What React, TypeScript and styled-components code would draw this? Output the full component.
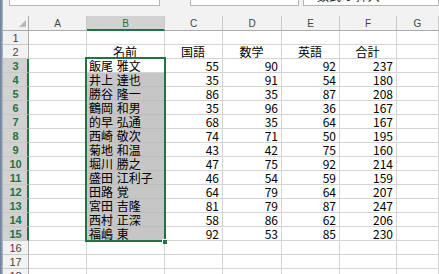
import styled, { createGlobalStyle } from 'styled-components';

const GlobalStyle = createGlobalStyle`
  html, body {
    margin: 0;
    padding: 0;
    background: #fff;
    overflow: hidden;
  }
  body {
    font-family: 'Liberation Sans', Arial, sans-serif;
  }
`;

const GREEN = '#217346';
const GRID = '#d4d4d4';
const HEAD_BG = '#f2f2f2';
const HEAD_SEL = '#d2d2d2';
const HEAD_LINE = '#c8c8c8';
const HEAD_EDGE = '#ababab';
const CELL_FONT = `'Noto Sans CJK JP', 'Liberation Sans', sans-serif`;

const COLUMNS = ['A', 'B', 'C', 'D', 'E', 'F', 'G'];
const ROW_COUNT = 18;
const FIRST_SEL = 3;
const LAST_SEL = 15;

const subjects = ['名前', '国語', '数学', '英語', '合計'];

const students: [string, number, number, number, number][] = [
  ['飯尾 雅文', 55, 90, 92, 237],
  ['井上 達也', 35, 91, 54, 180],
  ['勝谷 隆一', 86, 35, 87, 208],
  ['鶴岡 和男', 35, 96, 36, 167],
  ['的早 弘通', 68, 35, 64, 167],
  ['西崎 敬次', 74, 71, 50, 195],
  ['菊地 和温', 43, 42, 75, 160],
  ['堀川 勝之', 47, 75, 92, 214],
  ['盛田 江利子', 46, 54, 59, 159],
  ['田路 覚', 64, 79, 64, 207],
  ['宮田 吉隆', 81, 79, 87, 247],
  ['西村 正深', 58, 86, 62, 206],
  ['福嶋 東', 92, 53, 85, 230],
];

const Window = styled.div`
  display: flex;
  width: 439px;
  height: 274px;
  overflow: hidden;
  background: ${HEAD_BG};
`;

const Edge = styled.div`
  flex: 0 0 3px;
  background: linear-gradient(to right, #6e8199, #8d9cb0 70%, #c9d0da);
`;

const Main = styled.div`
  flex: 1;
  min-width: 0;
  display: flex;
  flex-direction: column;
`;

const FormulaBar = styled.div`
  flex: 0 0 16px;
  display: flex;
  align-items: flex-start;
  padding-left: 6px;
  gap: 4px;
`;

const BarBox = styled.div<{ $w?: number; $after?: number }>`
  flex: ${(p) => (p.$w ? `0 0 ${p.$w}px` : '1')};
  margin-right: ${(p) => p.$after ?? 0}px;
  height: 6px;
  box-sizing: border-box;
  background: #fff;
  border: 1px solid #b6b6b6;
  border-top: none;
  overflow: hidden;
`;

const BarText = styled.div`
  margin-top: -10px;
  padding-left: 13px;
  font-family: ${CELL_FONT};
  font-size: 12px;
  line-height: 12px;
  color: #222;
  white-space: nowrap;
`;

const Sheet = styled.div`
  display: grid;
  grid-template-columns: 26px 58px 78px 58px 59px 58px 57px 1fr;
  grid-template-rows: 15px repeat(${ROW_COUNT}, 14px);
  background: #fff;
`;

const Corner = styled.div`
  grid-row: 1;
  grid-column: 1;
  background: ${HEAD_BG};
  border-right: 1px solid ${HEAD_EDGE};
  border-bottom: 1px solid ${HEAD_EDGE};
  display: flex;
  align-items: flex-end;
  justify-content: flex-end;
  padding: 0 2px 3px 0;
`;

const ColHead = styled.div<{ $col: number; $sel: boolean }>`
  grid-row: 1;
  grid-column: ${(p) => p.$col};
  background: ${(p) => (p.$sel ? HEAD_SEL : HEAD_BG)};
  border-right: 1px solid ${HEAD_LINE};
  border-bottom: ${(p) => (p.$sel ? `2px solid ${GREEN}` : `1px solid ${HEAD_EDGE}`)};
  color: ${(p) => (p.$sel ? GREEN : '#444')};
  font-size: 10px;
  display: flex;
  align-items: center;
  justify-content: center;
  padding-top: 1px;
`;

const RowHead = styled.div<{ $row: number; $sel: boolean }>`
  grid-row: ${(p) => p.$row};
  grid-column: 1;
  background: ${(p) => (p.$sel ? HEAD_SEL : HEAD_BG)};
  border-bottom: 1px solid ${HEAD_LINE};
  border-right: ${(p) => (p.$sel ? `2px solid ${GREEN}` : `1px solid ${HEAD_EDGE}`)};
  color: ${(p) => (p.$sel ? GREEN : '#444')};
  font-weight: ${(p) => (p.$sel ? 700 : 400)};
  font-size: 11px;
  display: flex;
  align-items: center;
  justify-content: center;
  padding-left: ${(p) => (p.$sel ? 1 : 0)}px;
`;

const Cell = styled.div<{
  $row: number;
  $col: number;
  $sel?: boolean;
  $align?: 'left' | 'right' | 'center';
}>`
  grid-row: ${(p) => p.$row};
  grid-column: ${(p) => p.$col};
  background: ${(p) => (p.$sel ? '#c6c6c6' : '#fff')};
  border-right: 1px solid ${(p) => (p.$sel ? '#bdbdbd' : GRID)};
  border-bottom: 1px solid ${(p) => (p.$sel ? '#bdbdbd' : GRID)};
  padding: 0 3px 0 2px;
  font-family: ${CELL_FONT};
  font-size: 12px;
  line-height: 13px;
  color: #000;
  text-align: ${(p) => p.$align ?? 'left'};
  font-variant-numeric: tabular-nums;
  word-spacing: 1px;
  white-space: nowrap;
  overflow: hidden;
`;

const Selection = styled.div`
  grid-row: ${FIRST_SEL + 1} / ${LAST_SEL + 2};
  grid-column: 3;
  margin: -2px -1px -1px -2px;
  border: 2px solid ${GREEN};
  position: relative;
  pointer-events: none;
  z-index: 1;
`;

const FillHandle = styled.div`
  position: absolute;
  right: -3px;
  bottom: -4px;
  width: 4px;
  height: 4px;
  background: ${GREEN};
  border-left: 1px solid #fff;
  border-top: 1px solid #fff;
`;

const rowContent = (row: number): (string | number)[] => {
  if (row === 2) return ['', ...subjects];
  const s = students[row - 3];
  return s ? ['', ...s] : [];
};

const App = () => {
  const rows = Array.from({ length: ROW_COUNT }, (_, i) => i + 1);

  return (
    <>
      <GlobalStyle />
      <Window>
        <Edge />
        <Main>
          <FormulaBar>
            <BarBox $w={151} $after={26} />
            <BarBox $w={109} />
            <BarBox>
              <BarText>数式の 挿入</BarText>
            </BarBox>
          </FormulaBar>
          <Sheet>
            <Corner>
              <svg width="7" height="7" viewBox="0 0 7 7">
                <path d="M7 0 L7 7 L0 7 Z" fill="#b9b9b9" />
              </svg>
            </Corner>
            {COLUMNS.map((letter, i) => (
              <ColHead key={letter} $col={i + 2} $sel={letter === 'B'}>
                {letter}
              </ColHead>
            ))}
            {rows.map((row) => {
              const sel = row >= FIRST_SEL && row <= LAST_SEL;
              const values = rowContent(row);
              return [
                <RowHead key={`h${row}`} $row={row + 1} $sel={sel}>
                  {row}
                </RowHead>,
                ...COLUMNS.map((letter, c) => {
                  const value = values[c];
                  const align =
                    row === 2 ? 'center' : typeof value === 'number' ? 'right' : 'left';
                  return (
                    <Cell
                      key={`${letter}${row}`}
                      $row={row + 1}
                      $col={c + 2}
                      $sel={letter === 'B' && sel && row !== FIRST_SEL}
                      $align={align}
                    >
                      {value ?? ''}
                    </Cell>
                  );
                }),
              ];
            })}
            <Selection>
              <FillHandle />
            </Selection>
          </Sheet>
        </Main>
      </Window>
    </>
  );
};

export default App;
